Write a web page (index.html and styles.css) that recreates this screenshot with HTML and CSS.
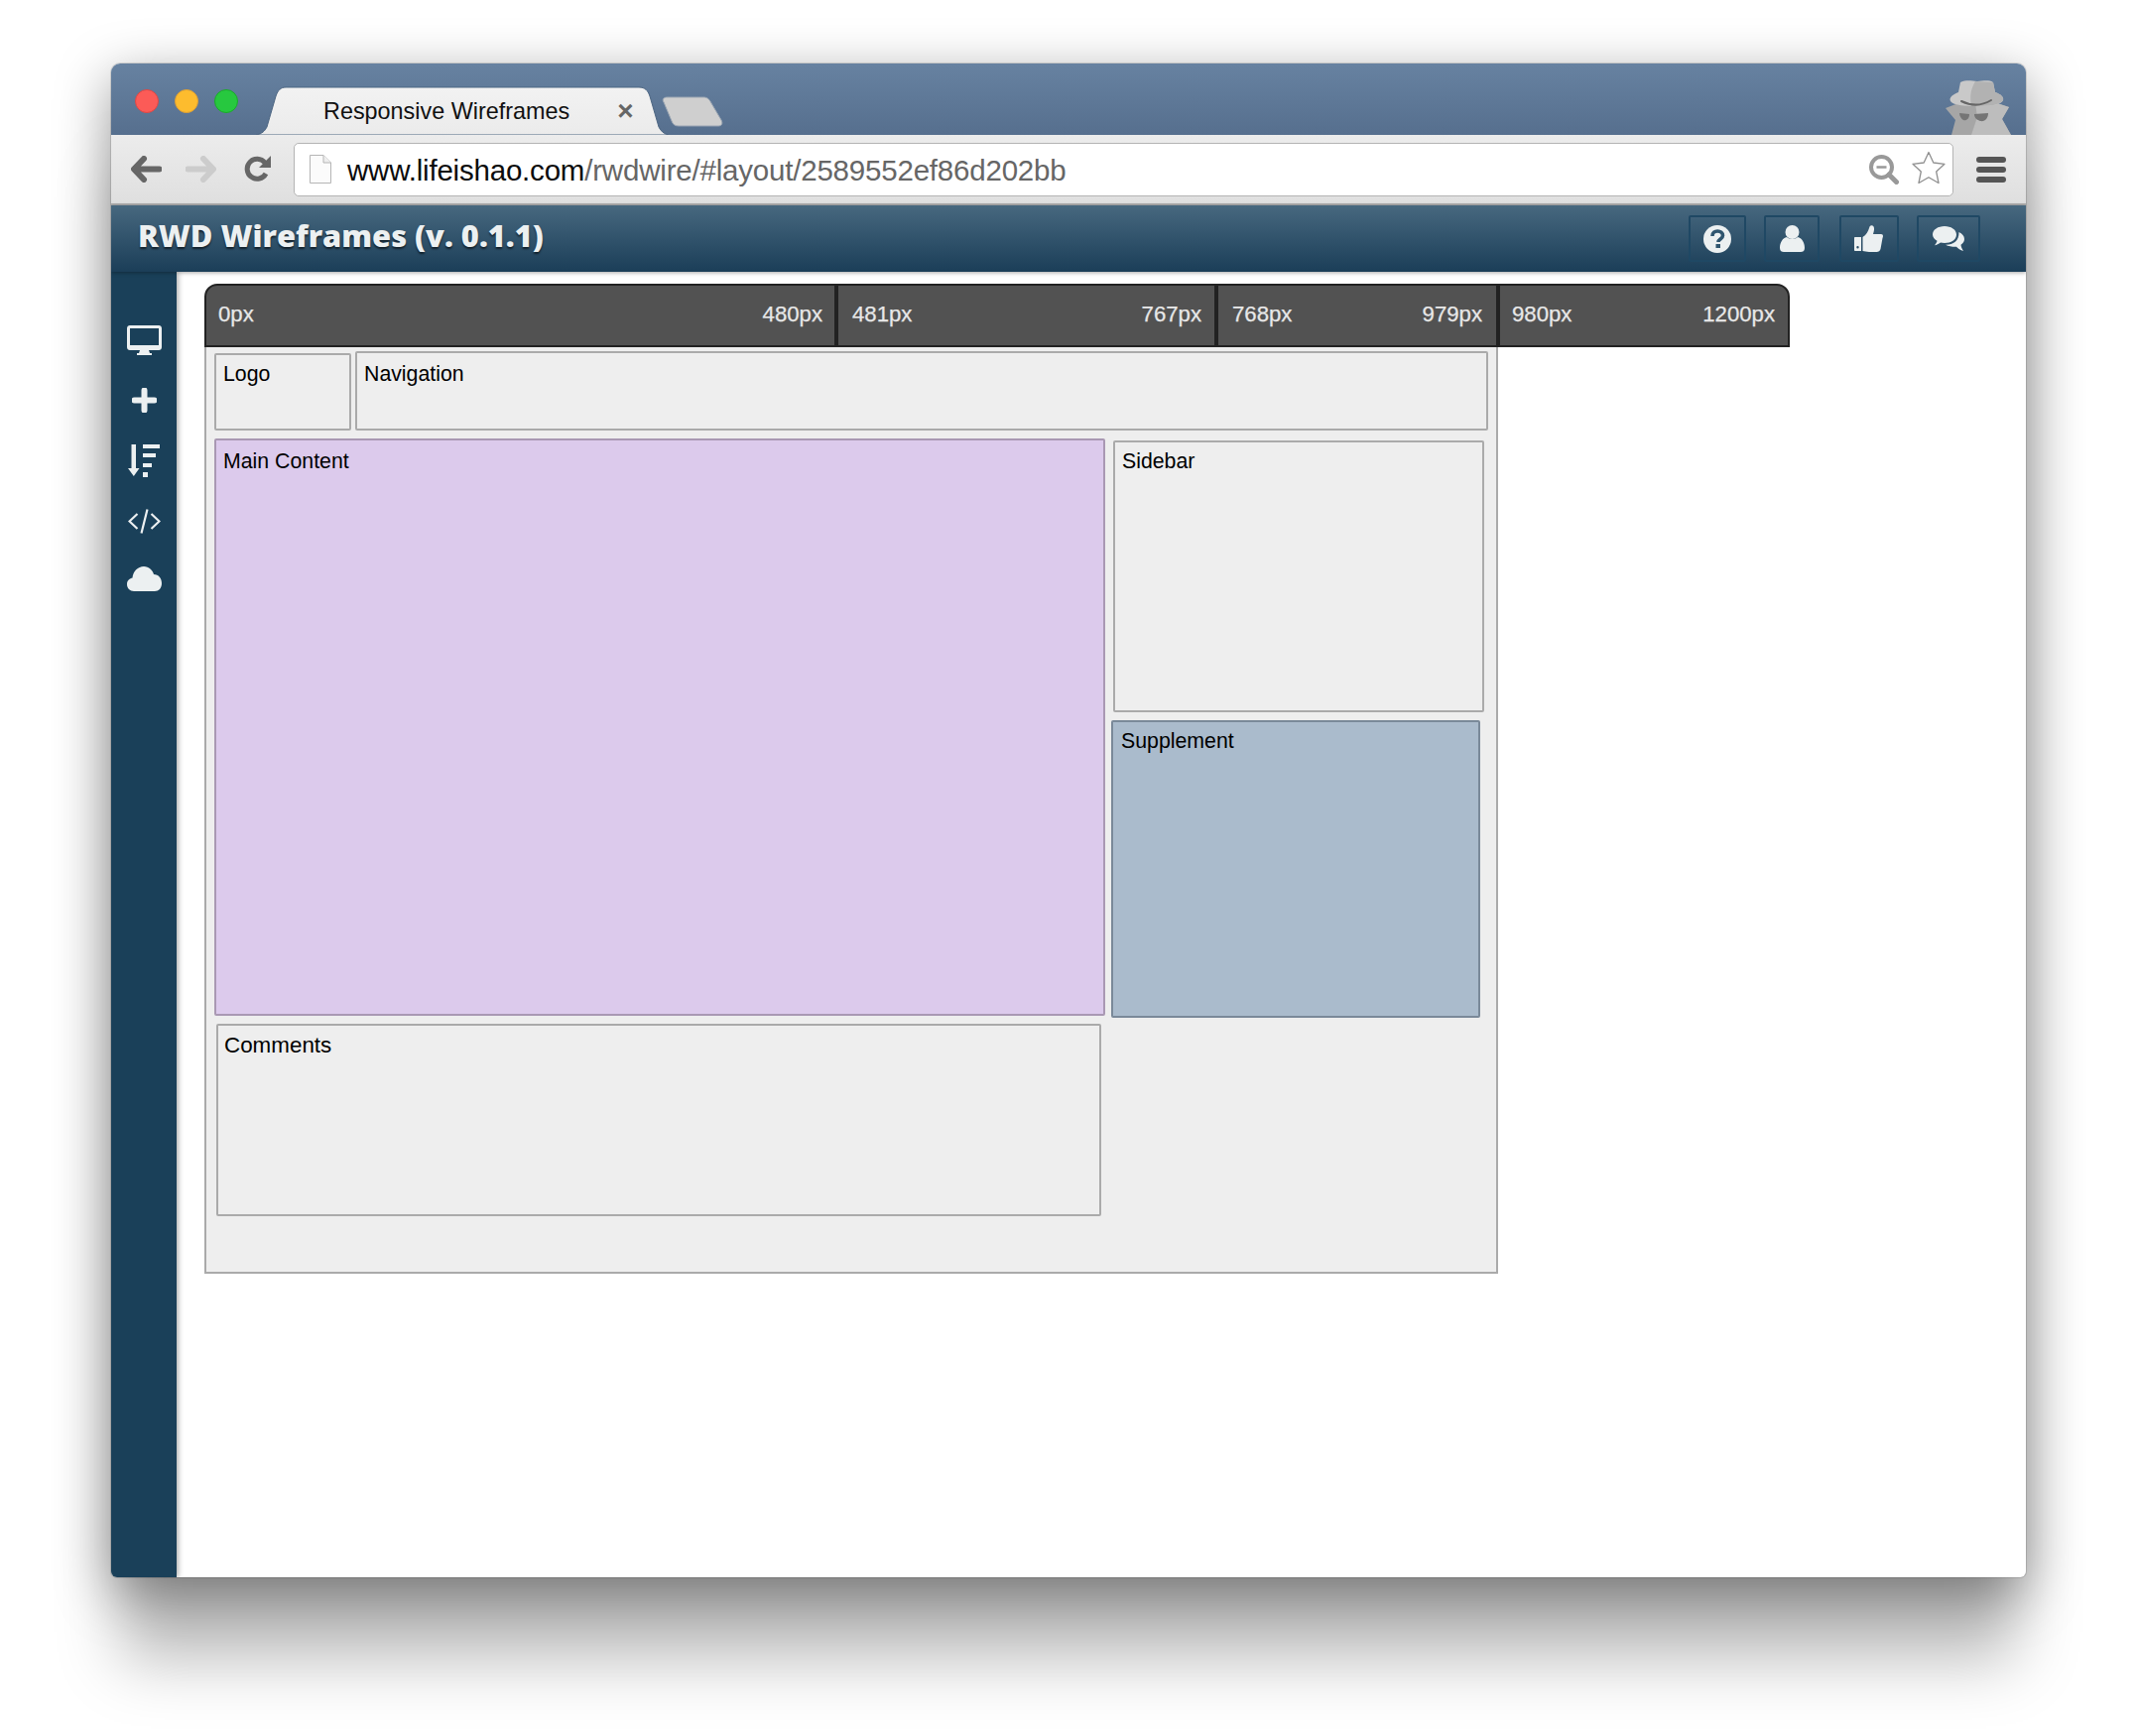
FILE: index.html
```html
<!DOCTYPE html>
<html lang="en">
<head>
<meta charset="utf-8">
<title>Responsive Wireframes</title>
<link rel="stylesheet" href="styles.css">
</head>
<body>
<div class="window">
  <div class="titlebar">
    <div class="lights">
      <span class="light red"></span>
      <span class="light yellow"></span>
      <span class="light green"></span>
    </div>
    <div class="tab">
      <svg class="tab-shape" width="416" height="49" viewBox="0 0 416 49">
        <defs><linearGradient id="tabg" x1="0" y1="0" x2="0" y2="1"><stop offset="0" stop-color="#f2f2f2"/><stop offset="1" stop-color="#ebebeb"/></linearGradient></defs>
        <path d="M0 49 C6 48 9 45 11 41 L20 10 C22 4 25 1 30 1 L386 1 C392 1 395 4 397 10 L406 41 C408 45 411 48 416 49 Z" fill="url(#tabg)" stroke="#4d6682" stroke-width="1"/>
      </svg>
      <span class="tab-title">Responsive Wireframes</span>
      <span class="tab-close">×</span>
    </div>
    <svg class="newtab" width="62" height="31" viewBox="0 0 62 31">
      <path d="M6 1 L42 1 C46 1 48 3 50 7 L60 24 C62 28 60 30 57 30 L17 30 C13 30 11 28 10 25 L2 6 C0 3 2 1 6 1 Z" fill="#cfcfcf" stroke="#9aa5b2" stroke-width="1"/>
    </svg>
    <svg class="incognito" width="66" height="56" viewBox="0 0 66 56">
      <path d="M0 29 L13 24 L52 24 L64 28 L57 40 L66 56 L6 56 L10 41 Z" fill="#a6a6a6"/>
      <path d="M30 24 L52 24 L64 28 L57 40 L66 56 L26 56 L32 38 Z" fill="#bdbdbd"/>
      <path d="M15 3 C22 0 27 2 32 2 C37 2 43 0 48 3 L50 13 C56 15 59 18 58 21 C56 26 44 27 32 27 C19 27 7 26 5 22 C3 18 8 15 13 13 Z" fill="#c9c9c9"/>
      <path d="M30 2 L48 3 L50 13 C56 15 59 18 58 21 C56 26 44 27 26 27 C25 20 24 12 30 2 Z" fill="#b2b2b2"/>
      <path d="M16 22 C26 27 36 27 46 21" fill="none" stroke="#666" stroke-width="2" stroke-linecap="round"/>
      <path d="M14 34 L24 35 C24 40 21 42 18 41 C16 40 14 37 14 34 Z M29 35 L43 34 C43 39 40 43 35 42 C32 41 29 39 29 35 Z" fill="#757575"/>
    </svg>
  </div>

  <div class="toolbar">
    <svg class="back" width="31" height="27" viewBox="0 0 31 27">
      <path d="M13 3 L3 13.5 L13 24 M4 13.5 L28.500 13.500" fill="none" stroke="#666" stroke-width="6" stroke-linecap="round" stroke-linejoin="round"/>
    </svg>
    <svg class="forward" width="31" height="27" viewBox="0 0 31 27">
      <path d="M18 3 L28 13.5 L18 24 M27 13.5 L2.500 13.500" fill="none" stroke="#ccc" stroke-width="6" stroke-linecap="round" stroke-linejoin="round"/>
    </svg>
    <svg class="reload" width="27" height="27" viewBox="0 0 27 27">
      <path d="M21 7 A10 10 0 1 0 22 18" fill="none" stroke="#666" stroke-width="5" stroke-linecap="butt"/>
      <path d="M27 0 L27 12 L15 12 Z" fill="#666"/>
    </svg>
    <div class="omnibox">
      <svg class="file" width="22" height="29" viewBox="0 0 22 29">
        <path d="M.5 .5 L14 .5 L21.500 8 L21.500 28.500 L.5 28.500 Z" fill="#fbfbfb" stroke="#b5b5b5"/>
        <path d="M14 .5 L14 8 L21.500 8" fill="#eee" stroke="#b5b5b5"/>
      </svg>
      <span class="url"><span class="url-host">www.lifeishao.com</span>/rwdwire/#layout/2589552ef86d202bb</span>
      <svg class="zoom" width="30" height="30" viewBox="0 0 30 30">
        <circle cx="12.500" cy="12.500" r="10.500" fill="none" stroke="#999" stroke-width="4"/>
        <path d="M7.500 12.500 L17.500 12.500" stroke="#999" stroke-width="2.500"/>
        <path d="M20 20 L27.500 27.500" stroke="#999" stroke-width="5" stroke-linecap="round"/>
      </svg>
      <svg class="star" width="34" height="34" viewBox="0 0 34 34">
        <path d="M17 1.500 L21.800 12 L33 13.300 L24.700 21 L27 32.500 L17 26.700 L7 32.500 L9.300 21 L1 13.300 L12.200 12 Z" fill="#fff" stroke="#8f8f8f" stroke-width="1.300" stroke-linejoin="round"/>
      </svg>
    </div>
    <div class="menu"><span></span><span></span><span></span></div>
  </div>

  <header class="appbar">
    <h1 class="brand">RWD Wireframes (v. 0.1.1)</h1>
    <nav class="actions">
      <a class="action a-help">
        <svg width="28" height="28" viewBox="0 0 28 28">
          <circle cx="14" cy="14" r="14" fill="#ecf0f1"/>
          <path d="M9 11 C9 7.500 11.500 6 14.200 6 C17 6 19.500 7.800 19.500 10.500 C19.500 14 15 14 15 17" fill="none" stroke="#2f556f" stroke-width="3.600"/>
          <rect x="12.500" y="19" width="4.500" height="4" fill="#2f556f"/>
        </svg>
      </a>
      <a class="action a-user">
        <svg width="25" height="27" viewBox="0 0 25 27">
          <circle cx="12.500" cy="7" r="7" fill="#ecf0f1"/>
          <path d="M7 12 C9 14.500 16 14.500 18 12 C22 13 25 17 25 23 C25 26 23 27 21 27 L4 27 C2 27 0 26 0 23 C0 17 3 13 7 12 Z" fill="#ecf0f1"/>
        </svg>
      </a>
      <a class="action a-like">
        <svg width="29" height="27" viewBox="0 0 29 27">
          <path d="M1 12 L7 12 L7 26 L1 26 C.4 26 0 25.500 0 25 L0 13 C0 12.400 .4 12 1 12 Z M3.500 21 A1.200 1.200 0 1 0 3.500 23.400 A1.200 1.200 0 1 0 3.500 21 Z" fill="#ecf0f1" fill-rule="evenodd"/>
          <path d="M8.500 12 C12 10 14 6 15 3 C15.500 .5 17 0 18.500 .5 C20.500 1.500 20.500 4.500 19 9 L27 9 C29 9 29.500 11 28.500 13 L26.500 24 C26 26 24.500 27 22.500 27 L15 27 C12.500 27 10.500 26 8.500 26 Z" fill="#ecf0f1"/>
        </svg>
      </a>
      <a class="action a-chat">
        <svg width="32" height="25" viewBox="0 0 32 25">
          <path d="M12 0 C18.500 0 24 3.500 24 8.500 C24 13.500 18.500 17 12 17 C10.500 17 9 16.800 8 16.500 C6 18 4 19 2 19.300 C3.500 17.500 4.300 16 4.500 14.800 C1.800 13.300 0 11 0 8.500 C0 3.500 5.500 0 12 0 Z" fill="#ecf0f1"/>
          <path d="M26.500 6 C29.800 7.500 32 10 32 13 C32 15.300 30.700 17.300 28.500 18.700 C28.700 20.500 29.500 22.500 31 25 C28 24.300 25.500 22.500 24 20.800 C21 21 16 20.500 13 18.800 C20.500 19 26.800 15 26.500 6 Z" fill="#ecf0f1"/>
        </svg>
      </a>
    </nav>
  </header>

  <div class="body">
    <aside class="rail">
      <svg width="35" height="30" viewBox="0 0 35 30">
        <path d="M3 0 L32 0 C33.700 0 35 1.300 35 3 L35 22 C35 23.700 33.700 25 32 25 L22 25 L23 28 L25 28 L25 30 L10 30 L10 28 L12 28 L13 25 L3 25 C1.300 25 0 23.700 0 22 L0 3 C0 1.300 1.300 0 3 0 Z M3 3 L3 20 L32 20 L32 3 Z" fill="#ecf0f1" fill-rule="evenodd"/>
      </svg>
      <svg class="rail-plus" width="25" height="25" viewBox="0 0 25 25">
        <path d="M12.500 2.500 L12.500 22.500 M2.500 12.500 L22.500 12.500" fill="none" stroke="#ecf0f1" stroke-width="6" stroke-linecap="round"/>
      </svg>
      <svg width="32" height="33" viewBox="0 0 32 33">
        <path d="M3.500 0 L8 0 L8 24 L11.500 24 L5.800 32 L0 24 L3.500 24 Z" fill="#ecf0f1"/>
        <rect x="15" y="0" width="17" height="4" fill="#ecf0f1"/>
        <rect x="15" y="9" width="13" height="4" fill="#ecf0f1"/>
        <rect x="15" y="19" width="9" height="4" fill="#ecf0f1"/>
        <rect x="15" y="28" width="5" height="5" fill="#ecf0f1"/>
      </svg>
      <svg width="33" height="25" viewBox="0 0 33 25">
        <path d="M9.500 5 L1.500 12.500 L9.500 20 M23.500 5 L31.500 12.500 L23.500 20 M19.500 .5 L13.500 24.500" fill="none" stroke="#ecf0f1" stroke-width="2.200"/>
      </svg>
      <svg class="rail-cloud" width="35" height="25" viewBox="0 0 35 25">
        <path d="M7 25 C3 25 0 22 0 18 C0 14 3 12 5.500 11.500 C6 5 11 0 17 0 C22 0 26 4 27 8 C32 8 35 12 35 17 C35 22 32 25 28 25 Z" fill="#ecf0f1"/>
      </svg>
    </aside>

    <main class="stage">
      <div class="breakpoints">
        <div class="bp bp-1"><span>0px</span><span>480px</span></div>
        <div class="bp bp-2"><span>481px</span><span>767px</span></div>
        <div class="bp bp-3"><span>768px</span><span>979px</span></div>
        <div class="bp bp-4"><span>980px</span><span>1200px</span></div>
      </div>
      <div class="canvas">
        <div class="box b-logo">Logo</div>
        <div class="box b-nav">Navigation</div>
        <div class="box b-main">Main Content</div>
        <div class="box b-side">Sidebar</div>
        <div class="box b-supp">Supplement</div>
        <div class="box b-comm">Comments</div>
      </div>
    </main>
  </div>
</div>
</body>
</html>
```

FILE: styles.css
```css
* { box-sizing: border-box; }
html, body { margin: 0; padding: 0; }
body {
  width: 2154px;
  height: 1750px;
  overflow: hidden;
  background: #fff;
  padding: 64px 0 0 112px;
  font-family: "Liberation Sans", Arial, sans-serif;
}

.window {
  width: 1930px;
  height: 1526px;
  display: flex;
  flex-direction: column;
  border-radius: 9px 9px 6px 6px;
  overflow: hidden;
  background: #fff;
  box-shadow: 0 15px 55px rgba(0, 0, 0, .4), 0 95px 60px -10px rgba(0, 0, 0, .25), 0 0 0 1px rgba(0, 0, 0, .12);
}

/* title bar */
.titlebar {
  flex: 0 0 72px;
  display: flex;
  background: linear-gradient(#6782a1, #566f8e);
}
.lights { display: flex; gap: 16px; padding: 26px 0 0 24px; }
.light { width: 24px; height: 24px; border-radius: 50%; border: 1px solid; }
.red { background: #fc5b57; border-color: #df4744; }
.yellow { background: #fdbc2e; border-color: #de9f34; }
.green { background: #27c83f; border-color: #1aab29; }

.tab {
  position: relative;
  width: 416px;
  height: 49px;
  margin: 23px 0 0 18px;
  display: flex;
  align-items: center;
  font-size: 23.4px;
  color: #111;
}
.tab-shape { position: absolute; left: 0; top: 0; }
.tab-title { position: relative; margin: 2px 0 0 68px; }
.tab-close { position: relative; margin-left: 48px; font-size: 28px; font-weight: 700; line-height: 1; color: #666; }
.newtab { margin: 33px 0 0 -7px; }
.incognito { margin: 16px 15px 0 auto; }

/* toolbar */
.toolbar {
  flex: 0 0 71px;
  display: flex;
  align-items: center;
  padding-left: 20px;
  background: linear-gradient(#ececec, #dfdfdf);
  border-bottom: 2px solid #adadad;
}
.forward { margin-left: 24px; }
.reload { margin-left: 28px; }
.omnibox {
  width: 1673px;
  height: 54px;
  margin-left: 23px;
  display: flex;
  align-items: center;
  padding: 0 7px 0 15px;
  background: #fff;
  border: 1px solid #b4b4b4;
  border-radius: 5px;
}
.url { margin: 2px 0 0 16px; font-size: 29.5px; letter-spacing: -.2px; color: #666; white-space: nowrap; }
.url-host { color: #0c0c0c; }
.zoom { margin-left: auto; }
.star { margin: -4px 0 0 13px; }
.menu { display: flex; flex-direction: column; gap: 4px; margin-left: 23px; }
.menu span { display: block; width: 30px; height: 6px; border-radius: 3px; background: #555; }

/* application header */
.appbar {
  position: relative;
  z-index: 2;
  flex: 0 0 67px;
  display: flex;
  align-items: center;
  justify-content: space-between;
  padding: 0 46px 0 27px;
  background: linear-gradient(#47687f, #1b3e58);
  box-shadow: 0 1px 4px rgba(0, 0, 0, .35);
}
.brand {
  margin: -7px 0 0;
  font: 800 30.8px "Open Sans", sans-serif;
  color: #ecf0f1;
  text-shadow: 0 2px 2px rgba(0, 0, 0, .6);
}
.actions { display: flex; gap: 18px; }
.action {
  height: 47px;
  display: flex;
  align-items: center;
  justify-content: center;
  border: 2px solid #1f4864;
  border-radius: 2px;
}
.a-help { width: 58px; }
.a-user { width: 56px; margin-right: 2px; }
.a-like { width: 60px; padding-right: 2px; }
.a-chat { width: 64px; }

/* body */
.body { flex: 1; display: flex; min-height: 0; }
.rail {
  position: relative;
  z-index: 1;
  flex: 0 0 66px;
  display: flex;
  flex-direction: column;
  align-items: center;
  padding-top: 54px;
  gap: 32px;
  background: #1a4059;
  box-shadow: 1px 0 6px rgba(0, 0, 0, .4);
}
.rail-plus { margin-top: 1px; }
.rail-cloud { margin-top: 1px; }
.stage { flex: 1; padding: 12px 28px; }

.breakpoints {
  width: 1598px;
  height: 64px;
  display: flex;
  background: #525252;
  border: 2px solid #222;
  border-radius: 13px 13px 0 0;
  font-size: 22.2px;
  color: #e8e8e8;
  -webkit-text-stroke: .25px #e8e8e8;
}
.bp {
  display: flex;
  align-items: center;
  justify-content: space-between;
  padding: 0 13px 2px 12px;
}
.bp-1, .bp-2, .bp-3 { border-right: 4px solid #222; }
.bp-1 { width: 637px; padding-right: 12px; }
.bp-2 { width: 383px; padding-left: 14px; padding-right: 13px; }
.bp-3 { width: 284px; padding-left: 14px; padding-right: 14px; }
.bp-4 { flex: 1; }

.canvas {
  position: relative;
  width: 1304px;
  height: 934px;
  background: #eee;
  border: 2px solid #aaa;
  border-top: 0;
}
.box {
  position: absolute;
  padding: 7px;
  font-size: 21.3px;
  line-height: 24px;
  color: #000;
  background: #eee;
  border: 2px solid #aaa;
  border-radius: 2px;
}
.b-logo { left: 8px; top: 6px; width: 138px; height: 78px; }
.b-nav { left: 150px; top: 4px; width: 1142px; height: 80px; padding-top: 9px; }
.b-main { left: 8px; top: 92px; width: 898px; height: 582px; padding-top: 9px; background: #dccaec; border-color: #a998b3; }
.b-side { left: 914px; top: 94px; width: 374px; height: 274px; }
.b-supp { left: 912px; top: 376px; width: 372px; height: 300px; padding-left: 8px; background: #aabbcc; border-color: #7a8999; }
.b-comm { left: 10px; top: 682px; width: 892px; height: 194px; padding-top: 8px; padding-left: 6px; font-size: 22.4px; }
```
